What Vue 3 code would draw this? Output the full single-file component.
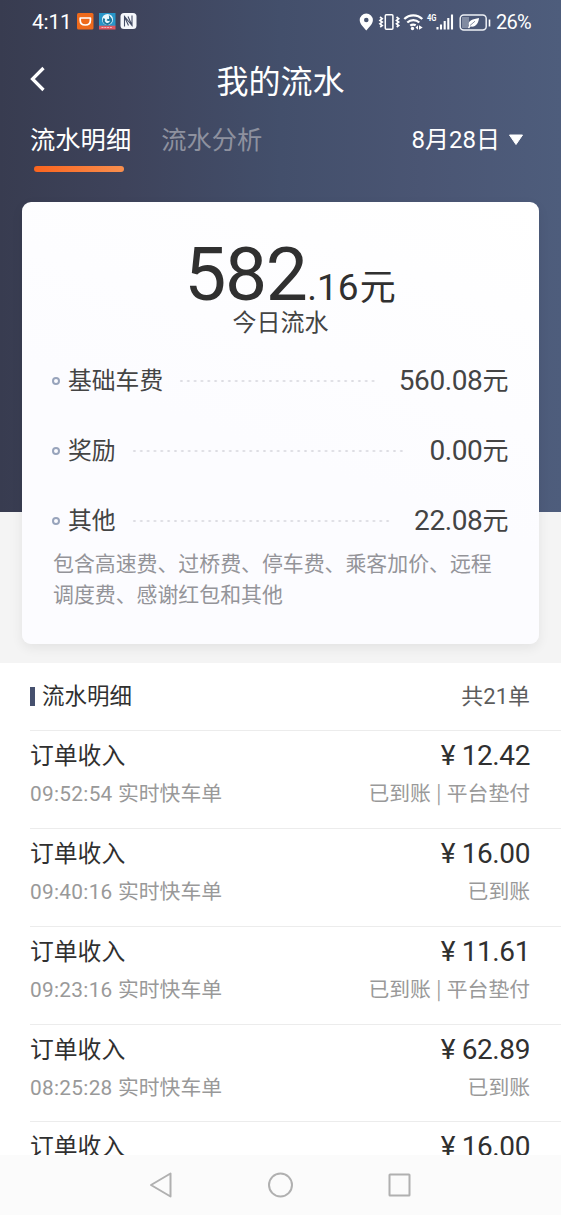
<script setup>
const fees = [
  { label: '基础车费', value: '560.08' },
  { label: '奖励', value: '0.00' },
  { label: '其他', value: '22.08' },
]
const orders = [
  { time: '09:52:54', amount: '12.42', advance: true },
  { time: '09:40:16', amount: '16.00', advance: false },
  { time: '09:23:16', amount: '11.61', advance: true },
  { time: '08:25:28', amount: '62.89', advance: false },
]
const partialOrder = { amount: '16.00' }
</script>

<template>
  <div class="screen">
    <div class="hero">
      <div class="status">
        <span class="clock">4:11</span>
        <svg class="apps" width="60" height="17" viewBox="0 0 60 17">
          <rect x="0" y="0" width="16.5" height="16.5" rx="1.5" fill="#ee6a1c" />
          <path d="M3.200 5h10.200v2.200c0 3-2 4.800-5.100 4.800S3.200 10.200 3.200 7.200z" fill="none" stroke="#fff" stroke-width="1.700" stroke-linejoin="round" />
          <rect x="22" y="0" width="16.500" height="13" fill="#2795c8" />
          <rect x="22" y="12.700" width="16.500" height="3.800" fill="#e0575f" />
          <circle cx="30.500" cy="6.500" r="5.500" fill="#e9f7fc" />
          <path d="M27.300 5.500a3.600 3.600 0 1 0 5.800-.6c.2 2-1.500 2.800-3 1.600" fill="none" stroke="#1d789f" stroke-width="1.900" />
          <path d="M24.500 14.500h11" stroke="#f4b8bc" stroke-width="1" stroke-dasharray="2 .8" />
          <rect x="43.500" y="0" width="16" height="16" rx="3.500" fill="#f5f7fb" />
          <path d="M47.500 13.500V3.500l7.500 9V2.500M47.300 3.300l4.200 9.200M51 3.500l4.300 9.500" fill="none" stroke="#434c65" stroke-width="1.100" />
        </svg>
        <svg class="signals" width="132" height="20" viewBox="359 11 132 20">
          <path d="M366.300 12.500a6.600 6.600 0 0 0-6.600 6.600c0 4.300 4.400 7.800 6.600 10.400 2.200-2.600 6.600-6.100 6.600-10.400a6.600 6.600 0 0 0-6.600-6.600z" fill="#fff" />
          <circle cx="366.300" cy="19" r="2.300" fill="#48546f" />
          <g fill="none" stroke="#fff">
            <rect x="385.300" y="13.800" width="7.600" height="14.400" rx="1" stroke-width="1.500" />
            <path d="M380 16l2.200 1.700-2.200 1.700 2.200 1.700-2.200 1.700 2.200 1.700-2 1.500M396.500 16l2.200 1.700-2.200 1.700 2.200 1.700-2.200 1.700 2.200 1.700-2 1.500" stroke-width="1.700" />
            <path d="M404.300 18a12.800 12.800 0 0 1 18 0M407.300 21.500a8.700 8.700 0 0 1 12 0M410.300 24.700a4.600 4.600 0 0 1 5.400-.4" stroke-width="2.200" />
          </g>
          <circle cx="412.500" cy="27.500" r="1.700" fill="#fff" />
          <path d="M415.500 26.500l2.500-2.200v4.400zM419 24.300l3.700 2.200-3.700 2.200z" fill="#fff" />
          <text x="427" y="20" font-size="9" font-weight="700" fill="#fff" textLength="9.500" lengthAdjust="spacingAndGlyphs">4G</text>
          <path d="M437.500 26v2.500M441 23.500v5M444.700 20v8.500M448.300 17v11.500M452 13.500v15" stroke="#fff" stroke-width="2.100" />
          <rect x="460.200" y="14" width="26" height="15" rx="3.500" fill="none" stroke="#eef1f6" stroke-width="1.500" />
          <path d="M462 16h7v11h-7z" fill="#818ba1" />
          <path d="M468 27l1-2.500c-1.500-5 4-6.500 10-7.500-.5 5-3 9.500-8.500 8.500l-1.300 1.800z" fill="#fff" />
          <path d="M470 24.500l5-4.300" stroke="#68738c" stroke-width=".8" />
          <path d="M489.500 18.500v7" stroke="#fff" stroke-width="1.600" />
        </svg>
        <span class="percent">26%</span>
      </div>
      <div class="title-bar">
        <svg class="back" width="18" height="28" viewBox="0 0 18 28">
          <path d="M15.500 3L4.500 14l11 11" fill="none" stroke="#fff" stroke-width="3.200" />
        </svg>
        <h1>我的流水</h1>
      </div>
      <div class="tabs">
        <span class="tab active">流水明细</span>
        <span class="tab">流水分析</span>
        <span class="date">8月28日</span>
        <svg class="caret" width="16" height="12" viewBox="0 0 16 12"><path d="M1.500 1h13L8 10.500z" fill="#fff" stroke="#fff" stroke-linejoin="round" /></svg>
      </div>
    </div>

    <section class="card">
      <div class="total"><span class="whole">582</span><span class="cents">.16</span><span class="unit">元</span></div>
      <div class="caption">今日流水</div>
      <div class="fees">
        <div v-for="fee in fees" :key="fee.label" class="fee">
          <i class="ring"></i>
          <span class="fee-label">{{ fee.label }}</span>
          <i class="dots"></i>
          <span class="fee-value">{{ fee.value }}<b>元</b></span>
        </div>
      </div>
      <p class="note">包含高速费、过桥费、停车费、乘客加价、远程<br />调度费、感谢红包和其他</p>
    </section>

    <section class="list">
      <div class="list-head">
        <i class="bar"></i>
        <h2>流水明细</h2>
        <span class="count">共21单</span>
      </div>
      <div v-for="order in orders" :key="order.time" class="order">
        <div class="line main">
          <span>订单收入</span>
          <span class="amount">¥ {{ order.amount }}</span>
        </div>
        <div class="line sub">
          <span class="kind"><span class="time">{{ order.time }}</span><span>实时快车单</span></span>
          <span class="state"><span>已到账</span><template v-if="order.advance"><span class="pipe">|</span><span>平台垫付</span></template></span>
        </div>
      </div>
      <div class="order">
        <div class="line main">
          <span>订单收入</span>
          <span class="amount">¥ {{ partialOrder.amount }}</span>
        </div>
      </div>
    </section>

    <nav class="nav">
      <svg width="26" height="28" viewBox="0 0 26 28"><path d="M21.500 2.500v23L2 14z" /></svg>
      <svg width="26" height="28" viewBox="0 0 26 28"><circle cx="12.500" cy="14" r="11.500" /></svg>
      <svg width="26" height="28" viewBox="0 0 26 28"><rect x="2.500" y="3.500" width="20" height="21" rx=".5" /></svg>
    </nav>
  </div>
</template>

<style>
body {
  margin: 0;
}
</style>

<style scoped>
.screen {
  width: 561px;
  height: 1215px;
  overflow: hidden;
  display: flex;
  flex-direction: column;
  background: #f4f4f4;
  font-family: Roboto, "Noto Sans CJK SC", sans-serif;
  white-space: nowrap;
}
.screen svg {
  display: block;
  flex: none;
}
.hero {
  flex: none;
  height: 512px;
  box-sizing: border-box;
  background: linear-gradient(90deg, #383c50 0%, #3e435b 22%, #434f6b 50%, #4a5573 75%, #4e5d7c 100%);
  color: #fff;
}
.status {
  display: flex;
  align-items: center;
  height: 43px;
  padding: 0 29px 0 32px;
}
.clock {
  width: 45px;
  font-size: 21px;
  letter-spacing: -.2px;
}
.signals {
  margin-left: auto;
}
.percent {
  width: 36px;
  margin-left: 5px;
  font-size: 20px;
  letter-spacing: -.7px;
}
.title-bar {
  position: relative;
  display: flex;
  align-items: center;
  justify-content: center;
  height: 74px;
}
.back {
  position: absolute;
  left: 28px;
  top: 22px;
}
h1 {
  margin: 4px 0 0;
  font-size: 32px;
  font-weight: 400;
  line-height: 40px;
}
.tabs {
  display: flex;
  align-items: center;
  height: 46px;
  padding: 0 37px 0 30px;
  font-size: 25.300px;
}
.tab {
  position: relative;
  margin-right: 30px;
  padding-top: 2px;
  line-height: 48px;
  color: #8e919f;
}
.tab.active {
  color: #fff;
}
.tab.active::after {
  content: "";
  position: absolute;
  left: 4px;
  bottom: -7px;
  width: 90px;
  height: 6px;
  border-radius: 3px;
  background: linear-gradient(90deg, #fa641e, #f98f4e);
}
.date {
  margin-left: auto;
  font-size: 24px;
  line-height: 44px;
}
.caret {
  margin-left: 8px;
}
.card {
  position: relative;
  flex: none;
  box-sizing: border-box;
  width: 517px;
  height: 442px;
  margin: -310px 0 0 22px;
  padding: 32px 31px 0;
  border-radius: 9px;
  background: linear-gradient(200deg, #fff, #fcfcff 55%);
  box-shadow: 0 4px 12px rgba(0, 0, 0, .07);
  color: #444;
}
.total {
  display: flex;
  align-items: baseline;
  justify-content: center;
  height: 72px;
  padding-left: 19px;
  line-height: 80px;
  color: #303030;
}
.whole {
  font-size: 75px;
  letter-spacing: -1.500px;
}
.cents {
  margin-left: 1px;
  font-size: 37px;
}
.unit {
  margin-left: 1px;
  font-size: 36px;
}
.caption {
  height: 32px;
  text-align: center;
  font-size: 24px;
  line-height: 34px;
}
.fees {
  margin-top: 7px;
}
.fee {
  display: flex;
  align-items: center;
  height: 70px;
}
.ring {
  box-sizing: border-box;
  width: 8px;
  height: 8px;
  margin: 1px 0 0 -1px;
  border: 2px solid #98a4bc;
  border-radius: 50%;
}
.fee-label {
  margin: -3px 0 0 8px;
  font-size: 23.800px;
}
.dots {
  flex: 1;
  height: 2px;
  margin: 1px 24px 0 15px;
  background: radial-gradient(circle, #dcdce2 1px, transparent 1.300px) 0 0 / 6.850px 2px;
}
.fee-value {
  margin-top: -4px;
  font-size: 28px;
  letter-spacing: -.4px;
}
.fee-value b {
  font-size: 26px;
  font-weight: 400;
}
.note {
  margin: -6px 0 0;
  font-size: 20.900px;
  line-height: 31px;
  color: #949499;
}
.list {
  flex: none;
  height: 492px;
  margin-top: 19px;
  overflow: hidden;
  background: #fff;
}
.list-head {
  display: flex;
  align-items: center;
  height: 67px;
  padding: 0 31px 0 30px;
}
.bar {
  width: 5px;
  height: 19px;
  background: #46506e;
}
h2 {
  margin: -5px 0 0 7px;
  font-size: 22.500px;
  font-weight: 400;
  color: #303030;
}
.count {
  margin: -6px 0 0 auto;
  font-size: 22px;
  color: #5c5c5c;
}
.order {
  box-sizing: border-box;
  height: 97.850px;
  margin-left: 30px;
  padding: 5px 31px 0 0;
  border-top: 1px solid #ececec;
}
.line {
  display: flex;
  justify-content: space-between;
}
.main {
  height: 40px;
  font-size: 23.800px;
  line-height: 40px;
  color: #303030;
}
.amount {
  font-size: 28px;
  letter-spacing: -.4px;
}
.sub {
  height: 36px;
  font-size: 20.800px;
  line-height: 36px;
  color: #999;
}
.kind,
.state {
  display: flex;
}
.time {
  width: 88px;
  letter-spacing: .3px;
}
.pipe {
  width: 16px;
  text-align: center;
  font-family: "Noto Sans CJK SC", sans-serif;
  font-size: 19px;
  line-height: 31px;
}
.nav {
  flex: none;
  display: flex;
  justify-content: center;
  gap: 93px;
  height: 60px;
  padding-top: 16px;
  box-sizing: border-box;
  background: #fbfbfb;
}
.nav svg {
  fill: none;
  stroke: #b0b0b0;
  stroke-width: 2;
  stroke-linejoin: round;
}
</style>
